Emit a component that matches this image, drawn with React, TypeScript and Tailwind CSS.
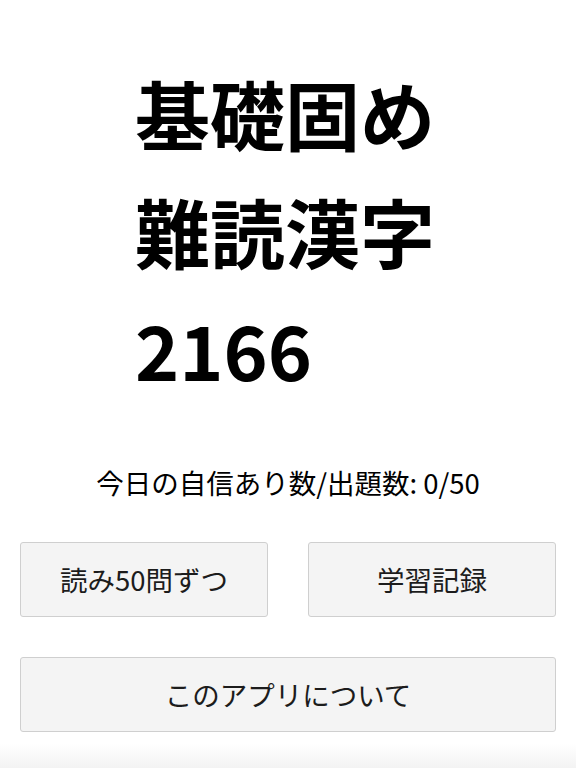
import React from 'react';

export default function App() {
  return (
    <div
      className="flex h-[768px] w-full flex-col bg-white text-black"
      style={{ fontFamily: '"Noto Sans CJK JP", "Noto Sans", sans-serif' }}
    >
      {/* Title */}
      <div className="pt-[54px]">
        <h1 className="ml-[135px] text-[75px] font-bold leading-[118px]">
          <div>基礎固め</div>
          <div>難読漢字</div>
          <div>2166</div>
        </h1>
      </div>

      {/* Today stats */}
      <p className="mt-[56px] text-center text-[27.5px] leading-[36px]">
        今日の自信あり数/出題数: 0/50
      </p>

      {/* Menu */}
      <div className="mt-[42px] flex flex-col gap-[40px] px-[20px]">
        <div className="grid grid-cols-2 gap-[40px]">
          <button className="h-[75px] rounded-[3px] border border-[#cfcfcf] bg-[#f4f4f4] text-[27.5px] text-[#1c1c1c]">
            読み50問ずつ
          </button>
          <button className="h-[75px] rounded-[3px] border border-[#cfcfcf] bg-[#f4f4f4] text-[27.5px] text-[#1c1c1c]">
            学習記録
          </button>
        </div>
        <button className="h-[75px] rounded-[3px] border border-[#cfcfcf] bg-[#f4f4f4] text-[27.5px] text-[#1c1c1c]">
          このアプリについて
        </button>
      </div>

      <div className="flex-1" />
      {/* bottom fade */}
      <div className="h-[24px] bg-gradient-to-b from-white to-[#f3f3f3]" />
    </div>
  );
}
